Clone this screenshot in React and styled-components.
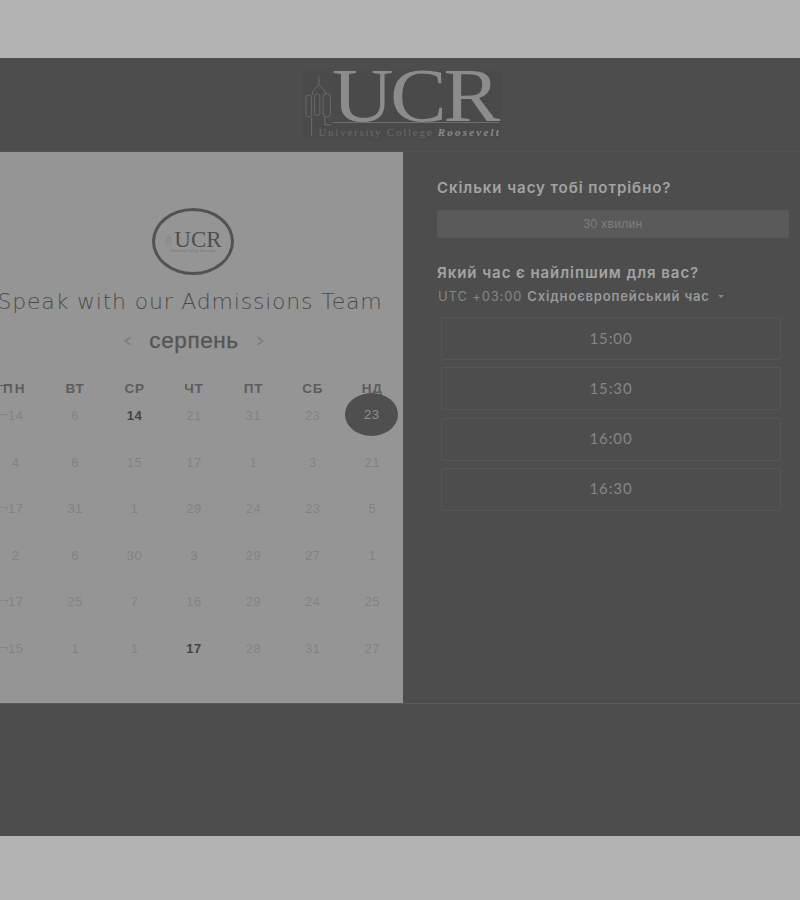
import React from "react";
import styled, { createGlobalStyle } from "styled-components";

const GlobalStyle = createGlobalStyle`
  html, body {
    margin: 0;
    padding: 0;
    background: #b3b3b3;
    font-family: "Liberation Sans", Arial, sans-serif;
  }
`;

const Page = styled.div`
  width: 800px;
  height: 900px;
  padding-top: 58px;
  box-sizing: border-box;
  overflow: hidden;
`;

const Modal = styled.div`
  height: 778px;
  background: #4d4d4d;
  display: flex;
  flex-direction: column;
  filter: blur(0.4px);
`;

const Header = styled.header`
  height: 94px;
  flex: none;
  box-sizing: border-box;
  border-bottom: 1px solid #525252;
  display: flex;
  justify-content: center;
  padding-top: 13px;
`;

const Logo = styled.div`
  width: 198px;
  height: 70px;
  margin-left: 4px;
  background: #4a4a4a;
  display: flex;
  padding: 5px 0 0 2px;
  box-sizing: border-box;
`;

const LogoText = styled.div`
  display: flex;
  flex-direction: column;
  margin-left: 1px;
`;

const LogoLetters = styled.div`
  width: 167px;
  height: 46px;
  border-bottom: 1px solid #6e6e6e;
  font-family: "Liberation Serif", serif;
  font-size: 76px;
  line-height: 38px;
  letter-spacing: -3px;
  color: #8c8c8c;
  white-space: nowrap;

  span {
    display: inline-block;
    transform: scaleX(1.12);
    transform-origin: left;
  }
`;

const LogoCaption = styled.div`
  font-family: "Liberation Serif", serif;
  font-size: 11px;
  line-height: 14px;
  letter-spacing: 1.75px;
  color: #6a6a6a;
  margin: 2px 0 0 -14px;
  white-space: nowrap;

  b {
    font-style: italic;
    letter-spacing: 2.2px;
    color: #8a8a8a;
  }
`;

const Body = styled.div`
  height: 552px;
  flex: none;
  display: flex;
  box-sizing: border-box;
  border-bottom: 1px solid #5a5a5a;
`;

const LeftPanel = styled.section`
  width: 403px;
  flex: none;
  background: #959595;
  overflow: hidden;
`;

const LeftInner = styled.div`
  width: 416px;
  margin-left: -15px;
  display: flex;
  flex-direction: column;
  align-items: center;
  padding-top: 56px;
`;

const Badge = styled.div`
  width: 82px;
  height: 67px;
  box-sizing: border-box;
  border: 3px solid #525252;
  border-radius: 50%;
  padding-top: 20px;
  display: flex;
  flex-direction: column;
  align-items: center;
`;

const BadgeTop = styled.div`
  display: flex;
  align-items: flex-end;
  gap: 1px;
`;

const BadgeLetters = styled.span`
  font-family: "Liberation Serif", serif;
  font-size: 23px;
  line-height: 17px;
  color: #4f4f4f;
`;

const BadgeCaption = styled.span`
  font-family: "Liberation Serif", serif;
  font-size: 3px;
  line-height: 4px;
  margin-top: 1px;
  letter-spacing: 0.3px;
  color: #6a6a6a;
  white-space: nowrap;
`;

const Title = styled.h1`
  margin: 12px 0 0;
  font-family: "DejaVu Sans", sans-serif;
  font-weight: 200;
  font-size: 22px;
  line-height: 30px;
  letter-spacing: 0.8px;
  color: #4c4c4c;
  white-space: nowrap;
  transform: translateX(-3px);
`;

const MonthRow = styled.div`
  margin: 7px 0 0 2px;
  display: flex;
  align-items: center;
  gap: 17px;
  height: 34px;
`;

const Month = styled.span`
  font-size: 22.5px;
  letter-spacing: 0.6px;
  color: #555;
  -webkit-text-stroke: 0.3px #555;
`;

const Days = styled.div`
  width: 416px;
  margin-top: 16.5px;
  align-self: flex-start;
  margin-left: 1px;
  display: grid;
  grid-template-columns: repeat(7, 1fr);
`;

const DayName = styled.div`
  height: 32.5px;
  line-height: 27px;
  position: relative;
  text-align: center;
  font-size: 13.5px;
  font-weight: 700;
  letter-spacing: 0.8px;
  color: #5d5d5d;
  ${(p) => p.$clipped && "letter-spacing: 2px; text-indent: -2px;"}
`;

const Notch = styled.i`
  position: absolute;
  left: 14px;
  top: ${(p) => p.$top}px;
  width: ${(p) => p.$width}px;
  height: 3px;
  box-sizing: border-box;
  border-top: 1px solid ${(p) => p.$color};
  border-right: 1px solid ${(p) => p.$color};
`;

const Cell = styled.div`
  height: 46.6px;
  display: flex;
  justify-content: center;
  align-items: flex-start;
  position: relative;
  font-size: 13px;
  line-height: 18px;
  letter-spacing: 0.5px;
  font-weight: ${(p) => (p.$active ? 700 : 400)};
  color: ${(p) => (p.$active ? "#444" : "#828282")};
`;

const SelectedDay = styled.span`
  position: absolute;
  left: 50%;
  top: -14px;
  width: 53px;
  height: 43px;
  margin-left: -27px;
  border-radius: 50%;
  background: #4f4f4f;
  color: #8f8f8f;
  display: flex;
  align-items: center;
  justify-content: center;
  font-weight: 400;
`;

const RightPanel = styled.section`
  flex: 1;
  padding: 26px 11px 0 34px;
  box-sizing: border-box;
`;

const Question = styled.h2`
  margin: 0;
  font-family: Inter, sans-serif;
  font-size: 15px;
  line-height: 20px;
  font-weight: 600;
  letter-spacing: 0.95px;
  color: #a3a3a3;
  white-space: nowrap;
`;

const Duration = styled.div`
  margin-top: 12px;
  height: 28px;
  line-height: 28px;
  width: 352px;
  background: #5a5a5a;
  border-radius: 2px;
  text-align: center;
  font-size: 12px;
  letter-spacing: 0.3px;
  color: #7f7f7f;
`;

const TimeQuestion = styled(Question)`
  margin-top: 25px;
`;

const Zone = styled.div`
  margin-top: 3px;
  font-family: Inter, sans-serif;
  font-size: 13px;
  line-height: 20px;
  letter-spacing: 0.85px;
  color: #868686;
  display: flex;
  align-items: center;
  white-space: nowrap;
  padding-left: 1px;

  b {
    margin-left: 5px;
    font-weight: 600;
    color: #9a9a9a;
  }
`;

const Caret = styled.span`
  margin-left: 8px;
  border: 3px solid transparent;
  border-top: 3px solid #868686;
  border-bottom: 0;
`;

const Slots = styled.div`
  margin: 11px 0 0 4px;
  width: 340px;
  display: flex;
  flex-direction: column;
  gap: 7.3px;
`;

const Slot = styled.div`
  height: 43px;
  box-sizing: border-box;
  border: 1px solid #565656;
  border-radius: 2px;
  display: flex;
  align-items: center;
  justify-content: center;
  padding-bottom: 2px;
  font-family: Lato, sans-serif;
  font-size: 15px;
  letter-spacing: 0.9px;
  color: #858585;
`;

const Tower = ({ width, height, stroke }) => (
  <svg width={width} height={height} viewBox="15 25 80 180" fill="none" stroke={stroke} strokeWidth="3">
    <path d="M57 25V50M57 50L38 72V82M57 50L76 72V82M35 148V205M75 148V172H95" />
    <rect x="18" y="82" width="17" height="66" rx="8" />
    <rect x="44" y="78" width="16" height="66" rx="7" />
    <rect x="70" y="78" width="22" height="70" rx="9" />
  </svg>
);

const Chevron = ({ dir }) => (
  <svg width="8" height="10" viewBox="0 0 8 10" fill="none" stroke="#7a7a7a" strokeWidth="1.6">
    <path d={dir === "left" ? "M6.5 1L1.5 5l5 4" : "M1.5 1l5 4-5 4"} />
  </svg>
);

const dayNames = ["ПН", "ВТ", "СР", "ЧТ", "ПТ", "СБ", "НД"];
const weeks = [
  [14, 6, 14, 21, 31, 23, 23],
  [4, 6, 15, 17, 1, 3, 21],
  [17, 31, 1, 29, 24, 23, 5],
  [2, 6, 30, 3, 29, 27, 1],
  [17, 25, 7, 16, 29, 24, 25],
  [15, 1, 1, 17, 28, 31, 27],
];
const activeCells = ["0-2", "5-3"];
const notchedRows = [0, 2, 4, 5];
const times = ["15:00", "15:30", "16:00", "16:30"];

export default function App() {
  return (
    <>
      <GlobalStyle />
      <Page>
        <Modal>
          <Header>
            <Logo>
              <Tower width={27} height={60} stroke="#6a6a6a" />
              <LogoText>
                <LogoLetters>
                  <span>UCR</span>
                </LogoLetters>
                <LogoCaption>
                  University College <b>Roosevelt</b>
                </LogoCaption>
              </LogoText>
            </Logo>
          </Header>
          <Body>
            <LeftPanel>
              <LeftInner>
                <Badge>
                  <BadgeTop>
                    <Tower width={9} height={15} stroke="#7a7a7a" />
                    <BadgeLetters>UCR</BadgeLetters>
                  </BadgeTop>
                  <BadgeCaption>University College Roosevelt</BadgeCaption>
                </Badge>
                <Title>Speak with our Admissions Team</Title>
                <MonthRow>
                  <Chevron dir="left" />
                  <Month>серпень</Month>
                  <Chevron dir="right" />
                </MonthRow>
                <Days>
                  {dayNames.map((d, i) => (
                    <DayName key={d} $clipped={i === 0}>
                      {d}
                      {i === 0 && <Notch $top={10} $width={12} $color="#5d5d5d" />}
                    </DayName>
                  ))}
                  {weeks.map((week, w) =>
                    week.map((day, i) => (
                      <Cell key={`${w}-${i}`} $active={activeCells.includes(`${w}-${i}`)}>
                        {i === 0 && notchedRows.includes(w) && <Notch $top={7} $width={8} $color="#858585" />}
                        {w === 0 && i === 6 ? <SelectedDay>{day}</SelectedDay> : day}
                      </Cell>
                    ))
                  )}
                </Days>
              </LeftInner>
            </LeftPanel>
            <RightPanel>
              <Question>Скільки часу тобі потрібно?</Question>
              <Duration>30 хвилин</Duration>
              <TimeQuestion>Який час є найліпшим для вас?</TimeQuestion>
              <Zone>
                UTC +03:00 <b>Східноєвропейський час</b>
                <Caret />
              </Zone>
              <Slots>
                {times.map((t) => (
                  <Slot key={t}>{t}</Slot>
                ))}
              </Slots>
            </RightPanel>
          </Body>
        </Modal>
      </Page>
    </>
  );
}
